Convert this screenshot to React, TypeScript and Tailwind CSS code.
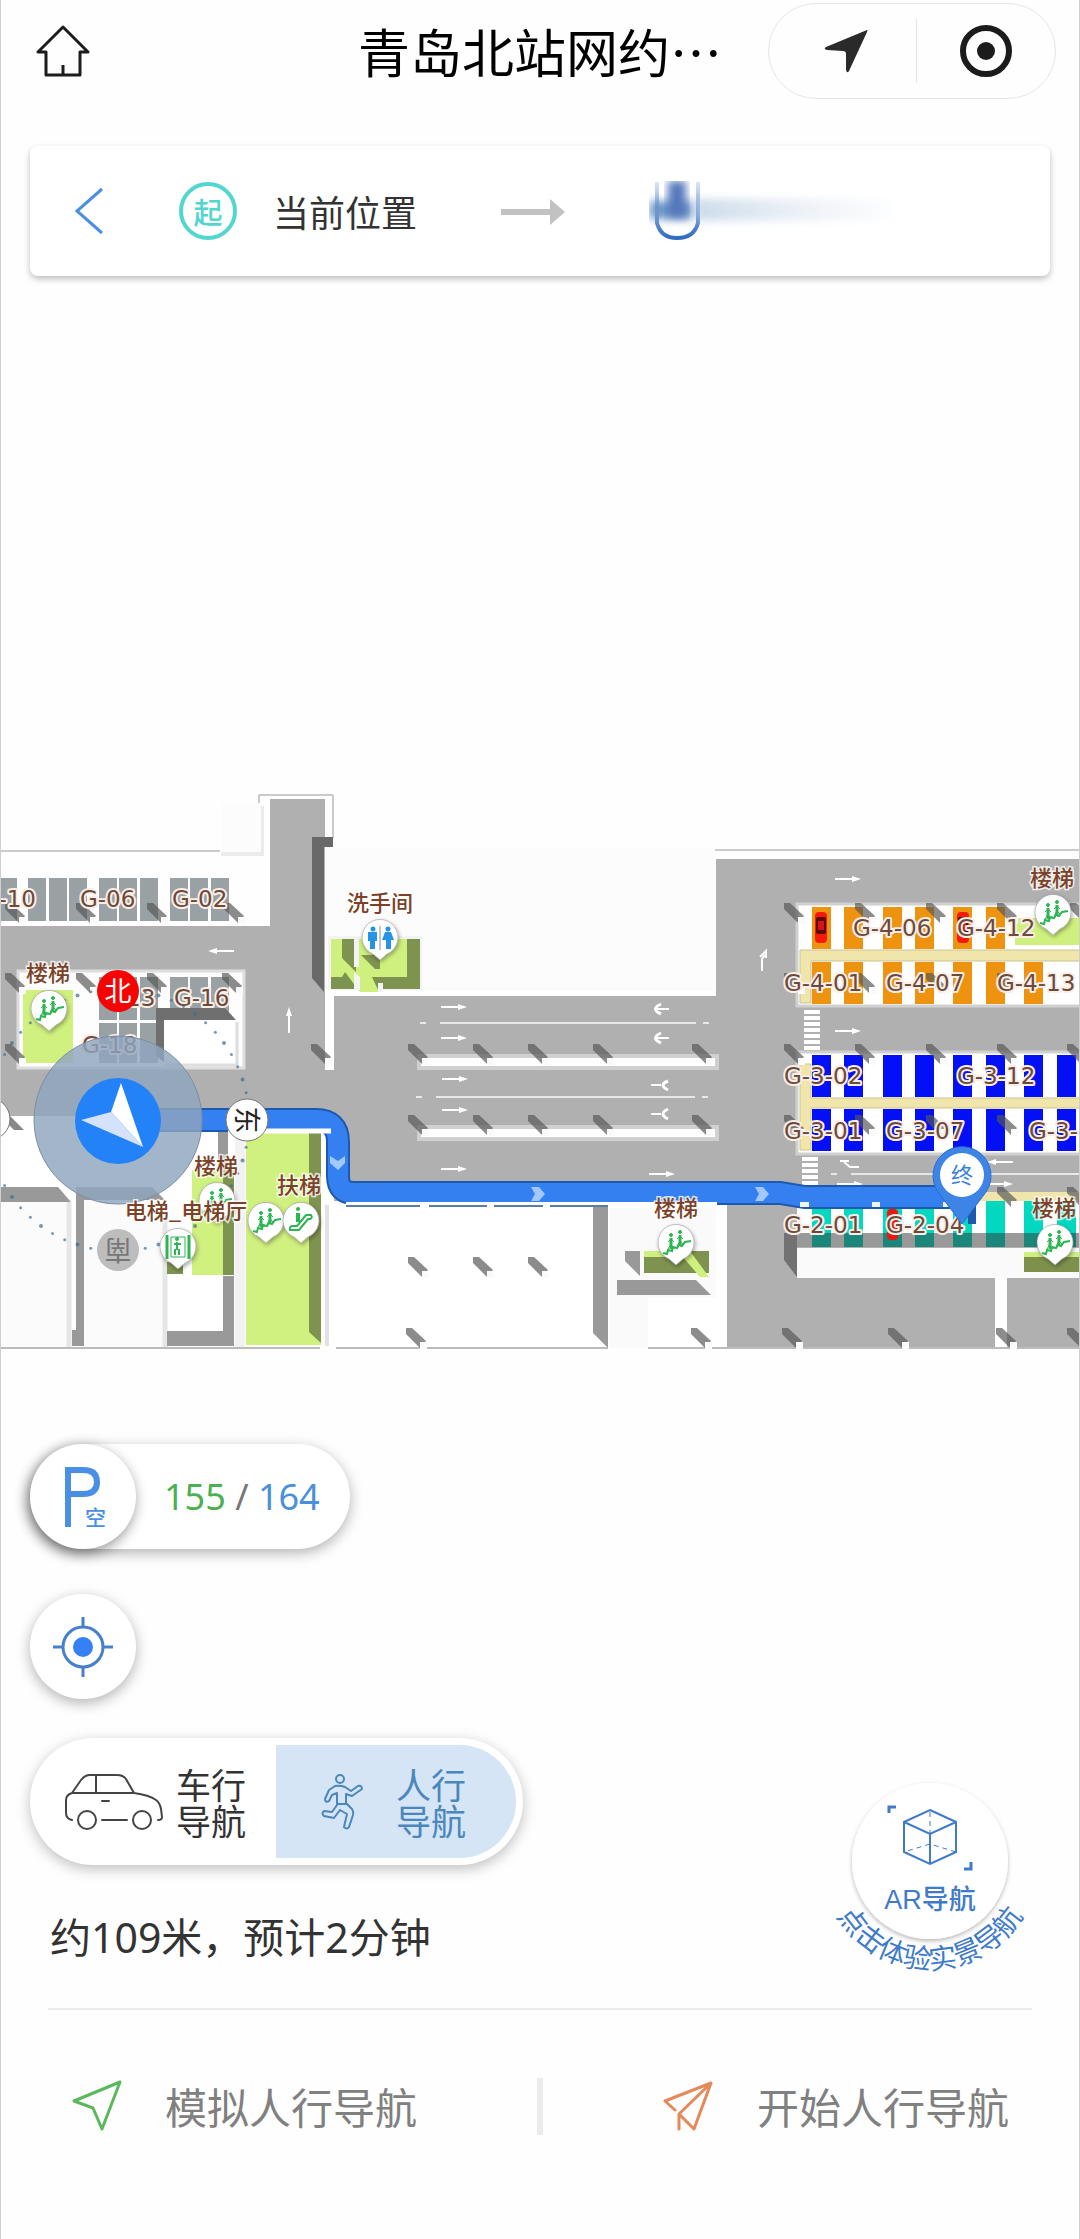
import React from 'react';

const SLOT_X = [812, 844, 883, 915, 953, 986, 1024, 1057];

const PILLARS: [number, number][] = [
  [5, 903], [76, 903], [147, 903], [224, 903],
  [5, 973], [76, 973], [147, 973], [222, 973], [5, 1044], [311, 1044],
  [408, 1044], [473, 1044], [528, 1044], [593, 1044], [692, 1044],
  [408, 1115], [473, 1115], [528, 1115], [593, 1115], [692, 1115],
  [784, 903], [855, 903], [926, 903], [997, 903], [1070, 903],
  [784, 973], [855, 973], [926, 973], [997, 973],
  [784, 1044], [855, 1044], [926, 1044], [997, 1044], [1067, 1044],
  [784, 1115], [855, 1115], [926, 1115], [997, 1115],
  [997, 1187], [1067, 1187],
  [408, 1257], [473, 1257], [528, 1257],
  [406, 1328], [691, 1328], [782, 1328], [888, 1328], [996, 1328], [1067, 1328],
];

// x, y, rotation
const ARROWS: [number, number, number][] = [
  [441, 1007, 0], [441, 1038, 0], [442, 1079, 0], [442, 1110, 0], [441, 1169, 0],
  [649, 1174, 0], [835, 879, 0], [835, 1031, 0], [837, 1184, 0], [987, 1184, 0],
  [234, 951, 180], [1013, 1162, 180], [289, 1033, -90],
];

const SPOTS: [string, number, number][] = [
  ['G-06', 80, 907], ['G-02', 172, 907], ['13', 126, 1006], ['G-16', 174, 1006],
  ['G-4-06', 853, 936], ['G-4-12', 957, 936],
  ['G-4-01', 784, 991], ['G-4-07', 886, 991], ['G-4-13', 997, 991],
  ['G-3-02', 784, 1084], ['G-3-12', 957, 1084],
  ['G-3-01', 784, 1139], ['G-3-07', 886, 1139], ['G-3-', 1029, 1139],
  ['G-2-01', 784, 1233], ['G-2-04', 886, 1233],
];

const PLACES: [string, number, number][] = [
  ['楼梯', 48, 981], ['洗手间', 380, 911], ['楼梯', 216, 1174], ['扶梯', 299, 1193],
  ['电梯_电梯厅', 186, 1219], ['楼梯', 676, 1216], ['楼梯', 1052, 886], ['楼梯', 1054, 1216],
];

function Pillar({ x, y }: { x: number; y: number }) {
  return (
    <g transform={`translate(${x} ${y})`}>
      <path d="M0 0H6L20 13L14 20L0 6Z" fill="#555" fillOpacity="0.68" />
      <path d="M14 14H21V21H14Z" fill="#fafafa" />
    </g>
  );
}

function Slots({ xs, y, height, fill }: { xs: number[]; y: number; height: number; fill: string }) {
  return (
    <g fill={fill}>
      {xs.map((x) => (
        <rect key={x} x={x} y={y} width={x < 300 ? 18 : 19} height={height} />
      ))}
    </g>
  );
}

function Pin({ x, y, children }: { x: number; y: number; children: React.ReactNode }) {
  return (
    <g transform={`translate(${x} ${y})`}>
      <path
        d="M-7 16A18 18 0 1 1 7 16L0 22Z"
        fill="#fff"
        stroke="#999"
        strokeOpacity="0.6"
        filter="url(#pinShadow)"
      />
      {children}
    </g>
  );
}

function Stairs() {
  return (
    <g stroke="#2db552" fill="none">
      <path d="M-13 10L-9 11L-8 7L-4 8L-3 4L1 5L3 2L6 3L9 -1L15 -2" strokeWidth="2" />
      <path d="M-5 6V-5M4 2V-8" strokeWidth="3" />
      <path d="M-8 6L-5 1M-8 -1L-5 -4L-2 -1M1 3L4 -2L7 1M1 -4L4 -7L7 -4" />
      <circle cx="-5" cy="-8" r="1.5" fill="#2db552" />
      <circle cx="4" cy="-11" r="1.5" fill="#2db552" />
    </g>
  );
}

function Car({ x, y }: { x: number; y: number }) {
  return (
    <g transform={`translate(${x} ${y})`}>
      <rect width="12" height="31" rx="4" fill="#f41b0c" />
      <rect x="1" y="5" width="10" height="17" rx="2" fill="#5c0a0a" />
      <rect x="3" y="9" width="6" height="9" fill="#d31414" />
    </g>
  );
}

function CompassDots() {
  const dots = Array.from({ length: 60 }, (_, i) => i).filter((i) => i % 15 > 1 && i % 15 < 14);
  return (
    <g fill="#3f6f90" fillOpacity="0.7">
      {dots.map((i) => {
        const a = (i * Math.PI) / 30;
        return <circle key={i} cx={118 + 131 * Math.cos(a)} cy={1120 + 131 * Math.sin(a)} r={i % 3 ? 1.5 : 2} />;
      })}
    </g>
  );
}

function ParkingMap() {
  return (
    <svg
      viewBox="1 276 1078 1084"
      className="block w-full"
      role="img"
      aria-label="停车场地图"
      fontFamily="'DejaVu Sans', 'Noto Sans CJK SC', sans-serif"
    >
      <defs>
        <filter id="pinShadow" x="-50%" y="-50%" width="200%" height="200%">
          <feDropShadow dx="1" dy="2" stdDeviation="2" floodColor="#000" floodOpacity="0.35" />
        </filter>
      </defs>

      {/* outlines and roads */}
      <path d="M0 851H220M259 803V795H333V838M715 850H1080" fill="none" stroke="#999" />
      <path d="M224 806H264V856H221Z" fill="#ebebeb" />
      <rect x="221" y="803" width="40" height="49" fill="#fcfcfc" />
      <g fill="#b0b0b0">
        <rect x="270" y="799" width="55" height="200" />
        <rect x="0" y="926" width="334" height="190" />
        <rect x="200" y="1066" width="150" height="64" />
        <rect x="334" y="996" width="400" height="205" />
        <rect x="716" y="859" width="364" height="345" />
        <rect x="727" y="1190" width="353" height="157" />
      </g>
      <rect x="325" y="847" width="390" height="149" fill="#fcfcfc" />
      <path d="M325 991H715V996H334V1070H325Z" fill="#fff" />
      <path d="M312 837H333V847H324V992L312 978Z" fill="#696969" />

      {/* west parking rows */}
      <Slots xs={[-1, 28, 49, 69, 99, 119, 140, 170, 190, 211]} y={878} height={43} fill="#9aa1a5" />
      <rect x="18" y="971" width="226" height="97" fill="#fdfdfd" stroke="#ddd" strokeWidth="3" />
      <Slots xs={[99, 119, 140, 170, 190, 211]} y={977} height={43} fill="#9aa1a5" />
      <Slots xs={[99, 119, 140]} y={1023} height={40} fill="#9aa1a5" />
      <path d="M156 1008H225L236 1020H164V1062L156 1056Z" fill="#6f6f6f" />
      <rect x="164" y="1020" width="71" height="44" fill="#fff" />
      <path d="M237 1022V1065H164" fill="none" stroke="#ddd" strokeWidth="3" />
      <rect x="23" y="990" width="50" height="73" fill="#d0f07f" />

      {/* restroom */}
      <path d="M328 936H422V990H328Z" fill="#f3f3f3" />
      <path d="M331 939H420V989H331Z" fill="#7f9350" />
      <path d="M331 939H342V958L356 972V939H407V977H372L379 992H360L345 972L342 977H331Z" fill="#cff07f" />
      <path d="M354 939H359V967H354ZM354 972L360 977V990H354ZM378 983H383V992H378Z" fill="#f3f3f3" />
      <path d="M361 955H380V969H375Z" fill="#7f9350" />

      {/* lane islands */}
      <g fill="#fff" stroke="#d0d0d0" strokeWidth="4">
        <rect x="419" y="1056" width="298" height="12" />
        <rect x="419" y="1127" width="298" height="12" />
      </g>
      <path
        d="M420 1023H426M440 1023H696M703 1023H709M416 1097H422M436 1097H695M702 1097H708M831 1174H837M851 1174H1080"
        stroke="#e8e8e8"
        strokeWidth="2"
      />

      {/* zone G-4 */}
      <rect x="797" y="904" width="290" height="102" fill="#fff" stroke="#d0d0d0" strokeWidth="3" />
      <Slots xs={SLOT_X.slice(0, 6)} y={907} height={42} fill="#ee930f" />
      <path d="M800 950H1080V961H811V1003H800Z" fill="#f0e5ab" stroke="#ccc392" />
      <Slots xs={SLOT_X.slice(0, 7)} y={962} height={42} fill="#ee930f" />
      <rect x="1015" y="918" width="65" height="27" fill="#cff07f" />

      {/* zone G-3 */}
      <rect x="797" y="1052" width="290" height="102" fill="#fff" stroke="#d0d0d0" strokeWidth="3" />
      <Slots xs={SLOT_X} y={1055} height={42} fill="#0310f5" />
      <path d="M800 1064H811V1098H1080V1108H811V1150H800Z" fill="#f0e5ab" stroke="#ccc392" />
      <Slots xs={SLOT_X} y={1109} height={42} fill="#0310f5" />

      {/* zone G-2 */}
      <rect x="797" y="1192" width="283" height="9" fill="#f0e5ab" />
      <rect x="797" y="1201" width="283" height="46" fill="#fff" />
      <Slots xs={SLOT_X} y={1201} height={46} fill="#02d8c0" />
      <path d="M784 1233H1080V1247H797V1277L784 1260Z" fill="#333" fillOpacity="0.5" />
      <rect x="797" y="1248" width="283" height="30" fill="#fafafa" />
      <rect x="1024" y="1253" width="56" height="19" fill="#7d914c" />
      <rect x="1024" y="1252" width="56" height="5" fill="#cff07f" />
      <rect x="995" y="1277" width="12" height="70" fill="#fff" />

      <path d="M812 1010V1050M810 1157V1185" stroke="#fff" strokeWidth="16" strokeDasharray="4 2" />
      <path d="M762 971V959L765 955M760 957L766 951V958M859 1167H850L844 1162M840 1161H849" fill="none" stroke="#fff" strokeWidth="2" />

      {/* south side, centre */}
      <rect x="330" y="1202" width="397" height="146" fill="#fff" />
      <path d="M593 1204H608V1348L593 1333Z" fill="#999" />
      <rect x="610" y="1208" width="106" height="140" fill="#fafafa" />
      <rect x="648" y="1298" width="79" height="50" fill="#fff" />
      <path d="M625 1251H640V1276L625 1261ZM617 1280H696L711 1295H617Z" fill="#999" />
      <rect x="644" y="1251" width="65" height="22" fill="#7f9350" />
      <path d="M644 1251H690L709 1277H700L683 1257H644Z" fill="#cff07f" />

      {/* south side, west */}
      <rect x="0" y="1116" width="234" height="232" fill="#fff" />
      <path d="M10 1116L24 1130H14L4 1120Z" fill="#888" />
      <path d="M0 1202H66V1347H0ZM84 1200H162V1347H84Z" fill="#fbfbfb" />
      <path d="M69 1202V1347M165 1200V1347" stroke="#e6e6e6" strokeWidth="5" />
      <path d="M0 1187H58L71 1202H0ZM76 1187H152L165 1200H84V1346H72V1330H76Z" fill="#999" />
      <rect x="218" y="1130" width="10" height="80" fill="#999" />
      <rect x="192" y="1170" width="42" height="105" fill="#d0f07f" />
      <rect x="223" y="1170" width="11" height="105" fill="#7f9350" />
      <path d="M223 1276H234V1346H167V1331H223Z" fill="#999" />
      <rect x="167" y="1262" width="16" height="12" fill="#7f9350" />
      <rect x="234" y="1130" width="96" height="218" fill="#fff" />
      <rect x="235" y="1130" width="10" height="218" fill="#f2f2f2" />
      <rect x="246" y="1133" width="75" height="212" fill="#d0f07f" />
      <path d="M309 1133H321V1343L309 1332Z" fill="#7f9350" />
      <path d="M327 1205V1346" stroke="#e2e2e2" strokeWidth="4" />
      <path d="M0 1348H320M336 1348H608M648 1348H1080" stroke="#bbb" strokeWidth="2" />

      {PILLARS.map(([x, y]) => (
        <Pillar key={`${x}-${y}`} x={x} y={y} />
      ))}

      {ARROWS.map(([x, y, r]) => (
        <g key={`${x}-${y}`} transform={`translate(${x} ${y}) rotate(${r})`} fill="#fff">
          <path d="M0 -1H17V-3L26 0L17 3V1H0Z" />
        </g>
      ))}
      <g fill="none" stroke="#fff" strokeWidth="3">
        <path d="M661 1004Q650 1009 661 1014M661 1033Q650 1038 661 1043" />
        <path d="M668 1081Q658 1085 668 1090M668 1109Q658 1114 668 1119" />
        <path d="M656 1009H669M656 1038H669M661 1085H651M661 1114H651" strokeWidth="2" />
      </g>

      <Car x={815} y={912} />
      <Car x={957} y={912} />
      <rect x="887" y="1209" width="11" height="31" rx="4" fill="#e8190f" />

      {/* route */}
      <rect x="968" y="1200" width="8" height="24" fill="#1d5aae" />
      <g fill="none">
        <path d="M120 1120H316Q338 1120 338 1142V1176Q338 1193 354 1193H780L805 1197H962" stroke="#1d5aae" strokeWidth="24" />
        <path d="M120 1120H316Q338 1120 338 1142V1176Q338 1193 354 1193H780L805 1197H962" stroke="#3580f1" strokeWidth="20" />
        <path d="M346 1204H717" stroke="#fff" strokeWidth="4" />
        <path d="M346 1206H420M429 1206H487M494 1206H543M550 1206H608" stroke="#5a7ca6" strokeWidth="2" />
        <path d="M228 1131H331" stroke="#fff" strokeWidth="5" />
      </g>
      <g fill="#a3c8ff">
        <path d="M330 1156L338 1161L345 1156V1163L338 1170L330 1163Z" />
        <path d="M531 1187H539L545 1194L539 1201H531L535 1194Z" />
        <path d="M755 1187H763L769 1194L763 1201H755L759 1194Z" />
      </g>
      <path d="M800 1202H809V1207H800ZM872 1202H880V1207H872ZM943 1202H950V1207H943Z" fill="#eef4fb" />

      {/* labels */}
      <g fontSize="23" fill="#6b4a3c" stroke="#fbeee6" strokeWidth="4" strokeLinejoin="round" paintOrder="stroke">
        <text x="36" y="907" textAnchor="end">-10</text>
        <text x="82" y="1053">G-18</text>
        {SPOTS.map(([name, x, y]) => (
          <text key={name} x={x} y={y}>{name}</text>
        ))}
      </g>

      <CompassDots />
      <circle cx="118" cy="1120" r="84" fill="#8fa5bd" fillOpacity="0.82" stroke="#7b8ea5" />
      <circle cx="118" cy="1121" r="43" fill="#2382f7" />
      <path d="M121 1083L143 1147L111 1112Z" fill="#fff" />
      <path d="M81 1120L111 1112L143 1147Z" fill="#d4e3fb" />

      <g textAnchor="middle" fontSize="27" fontFamily="'Noto Sans CJK SC', sans-serif">
        <circle cx="118" cy="991" r="21" fill="#f60404" />
        <text x="118" y="1001" fill="#fff">北</text>
        <circle cx="247" cy="1120" r="21" fill="#fff" stroke="#777" />
        <text transform="translate(247 1120) rotate(90)" y="10" fill="#222">东</text>
        <circle cx="118" cy="1250" r="21" fill="#bdbdbd" />
        <text transform="translate(118 1250) rotate(180)" y="10" fill="#777">南</text>
        <circle cx="-11" cy="1119" r="21" fill="#fff" stroke="#777" />
      </g>

      <Pin x={49} y={1009}><Stairs /></Pin>
      <Pin x={217} y={1201}><Stairs /></Pin>
      <Pin x={266} y={1221}><Stairs /></Pin>
      <Pin x={676} y={1243}><Stairs /></Pin>
      <Pin x={1053} y={913}><Stairs /></Pin>
      <Pin x={1055} y={1243}><Stairs /></Pin>
      <Pin x={301} y={1221}>
        <path d="M-11 9Q-12 5 -8 5H-4L5 -6H10Q12 -3 9 -2H7L-2 9Z" fill="none" stroke="#2db552" strokeWidth="2" />
        <path d="M-3 -8V1" stroke="#2db552" strokeWidth="4" />
        <circle cx="-3" cy="-12" r="2" fill="#2db552" />
      </Pin>
      <Pin x={178} y={1247}>
        <path d="M-11 -12V12M11 -12V12" fill="none" stroke="#2db552" strokeWidth="3" />
        <path d="M-7 -10H7V10H-7Z" fill="none" stroke="#2db552" />
        <path d="M-1 -5V3M-4 -3H3M-3 8V2M1 8V2" fill="none" stroke="#2db552" strokeWidth="2" />
        <circle cx="-1" cy="-8" r="2" fill="#2db552" />
      </Pin>
      <Pin x={380} y={938}>
        <path d="M0 -12V12" stroke="#8a8aa0" />
        <g fill="#2793e6">
          <circle cx="-7" cy="-9" r="2.5" />
          <path d="M-12 -6H-3V3H-5V11H-10V3H-12Z" />
          <circle cx="8" cy="-9" r="2.5" />
          <path d="M5 -6H11L14 2H11V11H6V2H2Z" />
        </g>
      </Pin>

      <g fontSize="22" fontWeight="500" fill="#7c4228" stroke="#fff" strokeOpacity="0.8" strokeWidth="3" paintOrder="stroke" textAnchor="middle" fontFamily="'Noto Sans CJK SC', sans-serif">
        {PLACES.map(([name, x, y]) => (
          <text key={`${x}-${y}`} x={x} y={y}>{name}</text>
        ))}
      </g>

      {/* destination */}
      <path d="M962 1224L938 1192A29 29 0 1 1 986 1192Z" fill="#3d84e6" stroke="#2a6fd2" />
      <circle cx="962" cy="1175" r="22" fill="#fff" />
      <text x="962" y="1183" textAnchor="middle" fontSize="22" fill="#3a80dd" fontFamily="'Noto Sans CJK SC', sans-serif">终</text>
    </svg>
  );
}

function Header() {
  return (
    <header className="grid h-[102px] grid-cols-[1fr_auto_1fr] items-center px-[23px]">
      <button type="button" aria-label="首页" className="w-fit pl-3">
        <svg width="54" height="54" viewBox="0 0 54 54" fill="none" stroke="#1c1c1c" strokeWidth="3" strokeLinejoin="round">
          <path d="M27 3L2 28H10V51H44V28H52Z" />
          <path d="M27 41V51" />
        </svg>
      </button>
      <h1 className="text-[52px] leading-[72px] text-black">青岛北站网约…</h1>
      <div className="flex h-24 w-[288px] items-center justify-self-end rounded-full border border-[#e6e6e6]">
        <button type="button" aria-label="定位" className="flex flex-1 justify-center pl-2">
          <svg width="44" height="44" viewBox="0 0 44 44" fill="#2a2a2a">
            <path d="M43 1Q44 0 43 3L25 42Q23 45 22 41V25Q22 22 19 22L3 21Q-1 20 2 18Z" />
          </svg>
        </button>
        <span className="h-16 w-px bg-[#e6e6e6]" />
        <button type="button" aria-label="关闭" className="flex flex-1 justify-center">
          <svg width="54" height="54" viewBox="0 0 54 54">
            <circle cx="27" cy="27" r="23" fill="none" stroke="#1b1b1b" strokeWidth="6" />
            <circle cx="27" cy="27" r="9" fill="#1b1b1b" />
          </svg>
        </button>
      </div>
    </header>
  );
}

function RouteCard() {
  return (
    <section className="mx-[29px] mt-11 flex h-[130px] items-center rounded-lg bg-white pl-11 shadow-[0_3px_6px_rgba(0,0,0,0.25)]">
      <button type="button" aria-label="返回">
        <svg width="30" height="48" viewBox="0 0 30 48" fill="none" stroke="#4a90e2" strokeWidth="3">
          <path d="M28 2L3 24L28 46" />
        </svg>
      </button>
      <span className="ml-[75px] flex h-[58px] w-[58px] items-center justify-center rounded-full border-4 border-[#52d6d0] text-[29px] leading-8 font-medium text-[#52d6d0]">
        起
      </span>
      <span className="ml-9 text-[36px] leading-[52px] text-[#333]">当前位置</span>
      <svg width="64" height="28" viewBox="0 0 64 28" fill="#c2c2c2" className="ml-[84px]">
        <path d="M0 12H49V2L64 15L49 28V18H0Z" />
      </svg>
      <svg width="260" height="60" viewBox="0 0 260 60" className="ml-[84px]">
        <defs>
          <filter id="soft" x="-20%" y="-40%" width="140%" height="180%">
            <feGaussianBlur stdDeviation="4" />
          </filter>
          <linearGradient id="trail">
            <stop offset="0" stopColor="#a9c2dd" stopOpacity="0.6" />
            <stop offset="0.5" stopColor="#d5e1ee" stopOpacity="0.5" />
            <stop offset="1" stopColor="#e6edf5" stopOpacity="0.1" />
          </linearGradient>
          <linearGradient id="ring" x1="0" y1="0" x2="0" y2="1">
            <stop offset="0" stopColor="#dbe6f4" />
            <stop offset="1" stopColor="#2f6cc0" />
          </linearGradient>
        </defs>
        <path d="M8 1V42Q12 57 28 57Q45 57 49 42V1" fill="none" stroke="url(#ring)" strokeWidth="4" />
        <rect x="46" y="18" width="200" height="22" fill="url(#trail)" filter="url(#soft)" />
        <rect x="1" y="20" width="42" height="18" fill="#6a95c8" filter="url(#soft)" />
        <rect x="19" y="0" width="18" height="36" fill="#5577bb" filter="url(#soft)" />
      </svg>
    </section>
  );
}

function ModeSwitch() {
  return (
    <div className="flex h-[127px] w-[493px] rounded-full bg-white py-[7px] pr-[7px] shadow-[0_4px_14px_rgba(0,0,0,0.25)]">
      <button type="button" className="flex flex-1 items-center gap-3 pl-[34px] text-[35px] leading-9 text-[#333]">
        <svg width="100" height="58" viewBox="0 0 100 58" fill="none" stroke="#444" strokeWidth="2" strokeLinecap="round">
          <path d="M8 47Q2 46 2 40V27Q2 22 8 20L17 7Q21 2 26 2H53Q59 2 62 6L70 20Q85 22 92 27Q96 30 97 36L98 44Q98 47 94 47M8 20H70M32 2V20M38 28H45M38 47H63" />
          <circle cx="23" cy="47" r="9" />
          <circle cx="78" cy="47" r="9" />
        </svg>
        <span>车行<br />导航</span>
      </button>
      <button type="button" className="flex w-[240px] items-center gap-8 rounded-r-full bg-[#d5e5f5] pl-11 text-[35px] leading-9 text-[#4a87bd]">
        <svg width="44" height="58" viewBox="0 0 44 58" fill="none" stroke="#4a87bd" strokeWidth="2" strokeLinejoin="round" strokeLinecap="round">
          <circle cx="20" cy="6" r="4" />
          <path d="M15 13Q20 12 25 14L31 18L38 13Q42 12 42 16L32 23L26 21V30L32 36Q34 39 33 42L29 54Q27 57 24 54L27 41L20 37L14 45L4 43Q1 40 4 38L12 39L17 32V20L12 22L9 28Q5 30 5 26L9 17ZM17 31H26" />
        </svg>
        <span>人行<br />导航</span>
      </button>
    </div>
  );
}

function ArButton() {
  return (
    <button type="button" aria-label="AR导航" className="mt-10 mr-5">
      <svg width="200" height="204" viewBox="0 0 200 204" fontFamily="'Liberation Sans', 'Noto Sans CJK SC', sans-serif">
        <defs>
          <filter id="arShadow" x="-20%" y="-20%" width="140%" height="140%">
            <feDropShadow dx="0" dy="2" stdDeviation="2" floodColor="#000" floodOpacity="0.28" />
          </filter>
          <path id="arc" d="M-8 83A108 108 0 0 0 208 83" />
        </defs>
        <circle cx="100" cy="83" r="78" fill="#fff" filter="url(#arShadow)" />
        <g fill="none" stroke="#3f7bc8" strokeWidth="2">
          <path d="M100 32L126 44V74L100 86L74 74V44ZM74 44L100 56L126 44M100 56V86" />
          <path d="M100 34V66L126 74M100 66L74 74" strokeWidth="1" strokeDasharray="5 4" />
          <path d="M59 35V29H66M134 91H141V84" strokeWidth="3" />
        </g>
        <text x="100" y="131" textAnchor="middle" fontSize="27" fontWeight="500" fill="#3f7bc8">AR导航</text>
        <text fontSize="28" fill="#3f7bc8" textAnchor="middle">
          <textPath href="#arc" startOffset="50%">点击体验实景导航</textPath>
        </text>
      </svg>
    </button>
  );
}

export default function App() {
  return (
    <main
      lang="zh-CN"
      className="min-h-screen border-x border-[#cfcfcf] bg-[#fefefe] font-['Noto_Sans_CJK_SC',sans-serif]"
    >
      <Header />
      <RouteCard />
      <ParkingMap />

      <section className="flex flex-col items-start px-[29px] pt-[84px]">
        <div className="flex h-[105px] items-center rounded-full bg-white pr-[30px] shadow-[0_4px_14px_rgba(0,0,0,0.3)]">
          <div className="flex h-[105px] w-[106px] items-center justify-center rounded-full bg-white shadow-[-2px_4px_14px_rgba(0,0,0,0.45)]">
            <svg width="46" height="62" viewBox="0 0 46 62" fontFamily="'Noto Sans CJK SC', sans-serif">
              <path d="M8 61V4H23Q37 4 37 16Q37 28 23 28H8" fill="none" stroke="#4a8fe6" strokeWidth="6" />
              <text x="25" y="59" fontSize="21" fontWeight="500" fill="#4a8fe6">空</text>
            </svg>
          </div>
          <p className="ml-7 font-['Noto_Sans',sans-serif] text-[36px] leading-[52px] text-[#777]">
            <span className="text-[#4caf50]">155</span> / <span className="text-[#4a8fdc]">164</span>
          </p>
        </div>

        <button
          type="button"
          aria-label="我的位置"
          className="mt-[45px] flex h-[105px] w-[106px] items-center justify-center rounded-full bg-white shadow-[0_4px_14px_rgba(0,0,0,0.3)]"
        >
          <svg width="60" height="60" viewBox="0 0 60 60">
            <circle cx="30" cy="30" r="20" fill="none" stroke="#4680cc" strokeWidth="3" />
            <circle cx="30" cy="30" r="10" fill="#3580f5" />
            <path d="M30 0V10M30 50V60M0 30H10M50 30H60" stroke="#4680cc" strokeWidth="3" />
          </svg>
        </button>

        <div className="mt-[39px] flex w-full justify-between">
          <div>
            <ModeSwitch />
            <p className="mt-11 ml-5 font-['Noto_Sans','Noto_Sans_CJK_SC',sans-serif] text-[41px] leading-[56px] text-[#333]">
              约109米，预计2分钟
            </p>
          </div>
          <ArButton />
        </div>
      </section>

      <hr className="mx-[47px] mt-[26px] border-t-2 border-[#ebebeb]" />

      <footer className="flex items-center justify-between px-[70px] pt-[66px] pb-[103px] text-[42px] leading-[60px] text-[#808080]">
        <button type="button" className="flex items-center gap-[42px]">
          <svg width="52" height="52" viewBox="0 0 52 52" fill="none" stroke="#5cb85c" strokeWidth="3" strokeLinejoin="round">
            <path d="M49 2L3 21L22 28L31 49Z" />
          </svg>
          模拟人行导航
        </button>
        <span className="h-[57px] w-[6px] bg-[#ebebeb]" />
        <button type="button" className="flex items-center gap-[42px]">
          <svg width="52" height="52" viewBox="0 0 52 52" fill="none" stroke="#e5895c" strokeWidth="3" strokeLinejoin="round" strokeLinecap="round">
            <path d="M12 30L2 21L48 3L31 49L16 34V49M16 34L48 3" />
          </svg>
          开始人行导航
        </button>
      </footer>
    </main>
  );
}
